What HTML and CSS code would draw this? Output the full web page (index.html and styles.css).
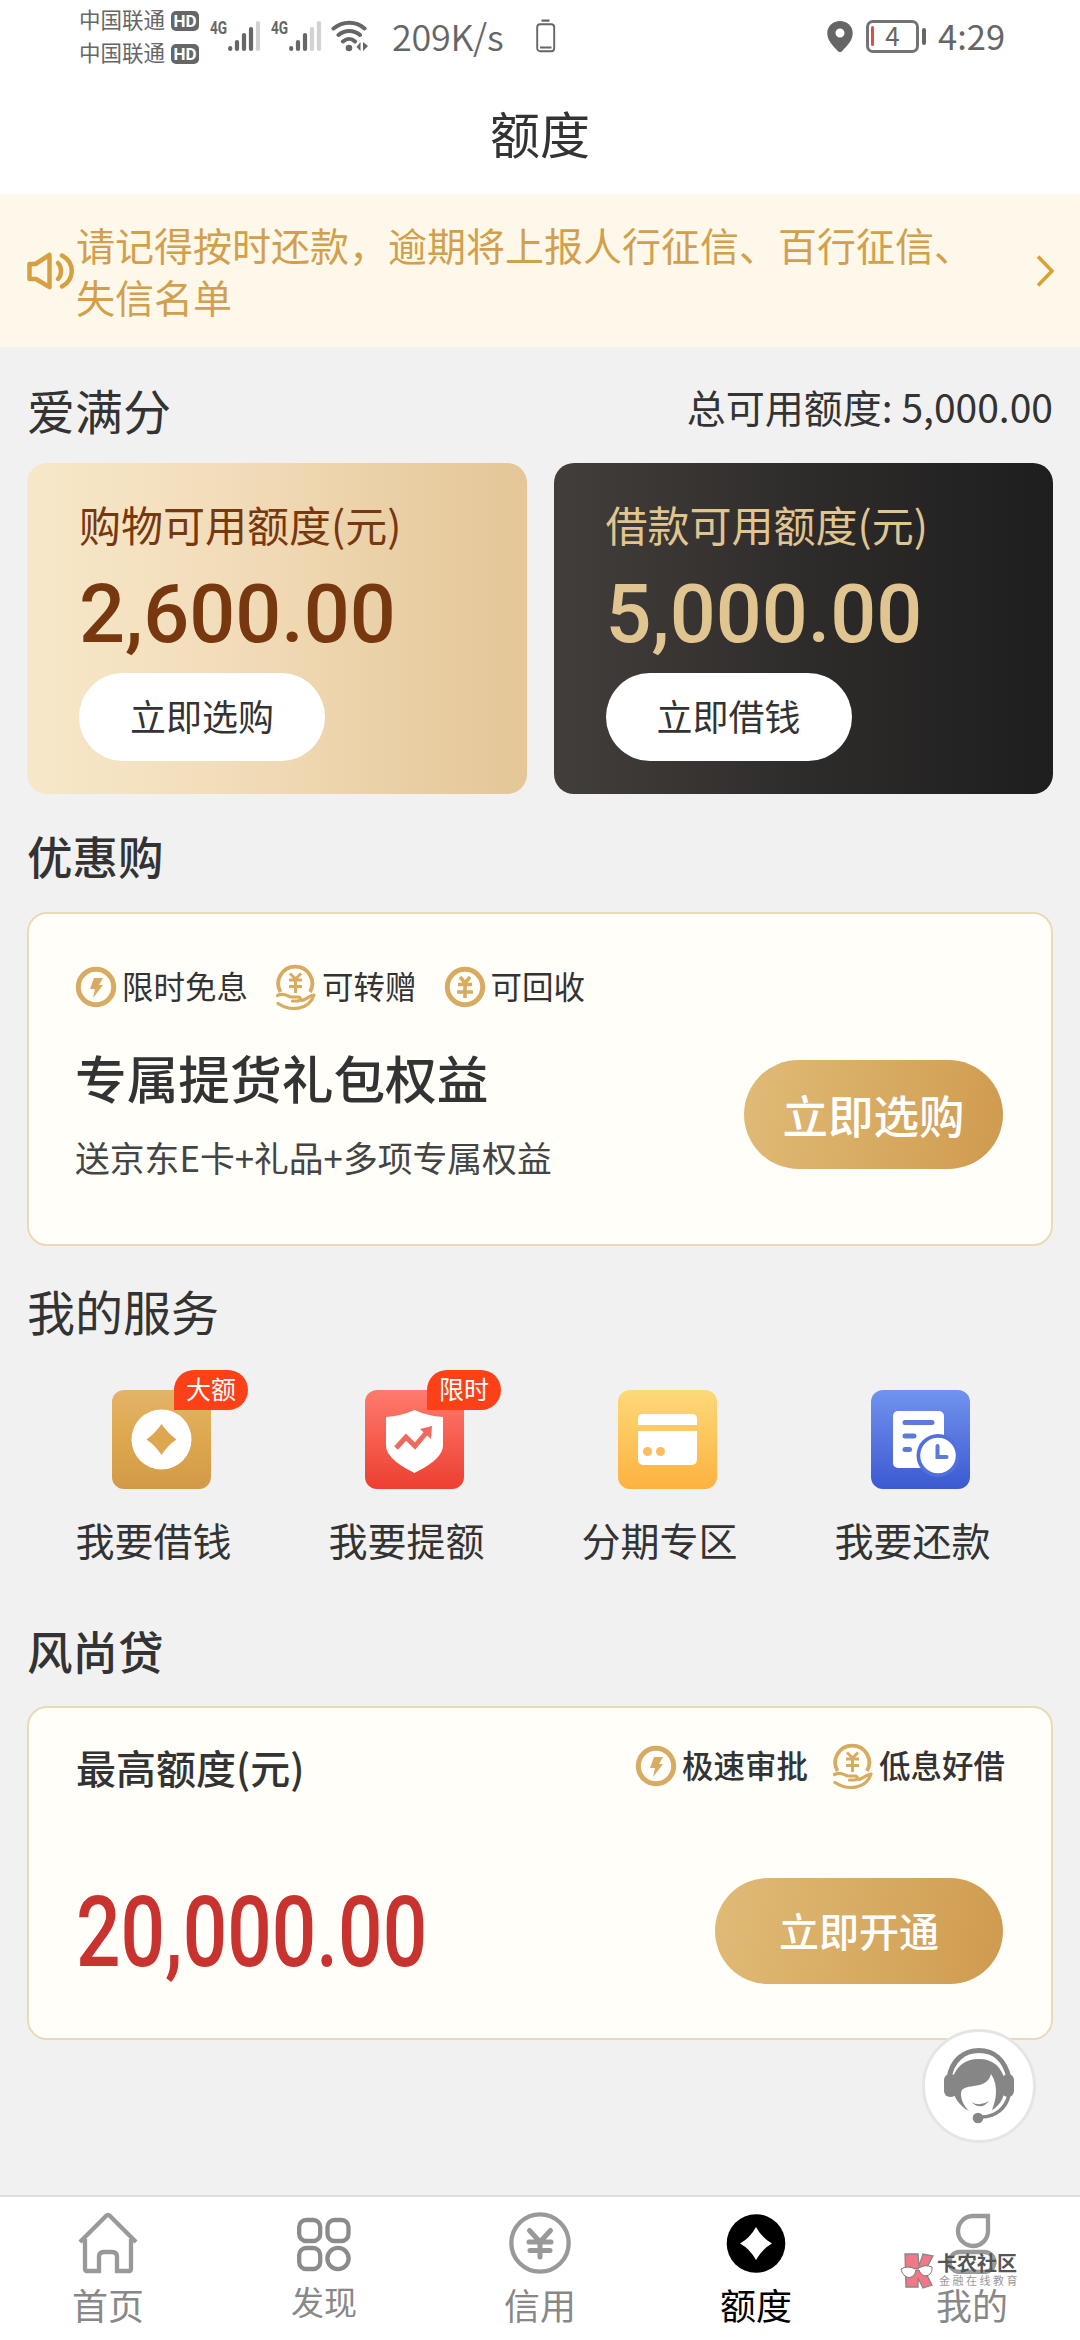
FILE: index.html
```html
<!DOCTYPE html>
<html lang="zh-CN">
<head>
<meta charset="utf-8">
<title>额度</title>
<link rel="stylesheet" href="styles.css">
</head>
<body>
<svg class="defs" width="0" height="0">
  <defs>
    <linearGradient id="amber" x1="0" y1="0" x2="0" y2="1"><stop offset="0" stop-color="#e3b468"/><stop offset=".5" stop-color="#dda74f"/><stop offset="1" stop-color="#d29a48"/></linearGradient>
    <linearGradient id="red" x1="0" y1="0" x2="0" y2="1"><stop offset="0" stop-color="#ff7b6d"/><stop offset="1" stop-color="#ec3f31"/></linearGradient>
    <linearGradient id="yellow" x1="0" y1="0" x2="0" y2="1"><stop offset="0" stop-color="#fdd978"/><stop offset="1" stop-color="#fdb23f"/></linearGradient>
    <linearGradient id="blue" x1="0" y1="0" x2="0" y2="1"><stop offset="0" stop-color="#7193ee"/><stop offset="1" stop-color="#3c59d1"/></linearGradient>
    <symbol id="bolt" viewBox="0 0 42 44">
      <circle cx="21" cy="22" r="17.700" fill="none" stroke="#d8ab63" stroke-width="5"/>
      <path d="M19 13h9l-4 7h4L18 33l2-9h-5z" fill="#d8ab63"/>
    </symbol>
    <symbol id="yen" viewBox="0 0 42 44">
      <circle cx="21" cy="22" r="17.700" fill="none" stroke="#d8ab63" stroke-width="5"/>
      <path d="M16 12l5 6 5-6M21 18v15M14 19.500h14M13 27h16" fill="none" stroke="#d8ab63" stroke-width="3.600"/>
    </symbol>
    <symbol id="hand" viewBox="0 0 42 48">
      <path d="M5.500 29A17 17 0 1 1 35 29" fill="none" stroke="#d8ab63" stroke-width="3.800"/>
      <path d="M15 10.500l5.500 5.500 5.500-5.500M20.500 16v14M14 17h13M14 23.500h13" fill="none" stroke="#d8ab63" stroke-width="3"/>
      <path d="M2.500 32.500c6-3 9 0 13 1.500h8c3 1 2 4-1 4h-5" fill="none" stroke="#d8ab63" stroke-width="3.200" stroke-linecap="round"/>
      <path d="M3 40.500c12 8 31 7 36-8.500-4 0-7 4-12 5.500" fill="none" stroke="#d8ab63" stroke-width="3.200" stroke-linecap="round" stroke-linejoin="round"/>
    </symbol>
  </defs>
</svg>

<header class="status">
  <div class="carriers">
    <div class="carrier">中国联通<b>HD</b></div>
    <div class="carrier">中国联通<b>HD</b></div>
  </div>
  <div class="signal"><span>4G</span>
    <svg width="33" height="32" viewBox="0 0 33 32"><path d="M2.200 28v1M9 22v7M16 15v14M23 9v20" stroke="#666" stroke-width="4.200" stroke-linecap="round"/><path d="M30 3v26" stroke="#d2d2d2" stroke-width="4.200" stroke-linecap="round"/></svg>
  </div>
  <div class="signal second"><span>4G</span>
    <svg width="33" height="32" viewBox="0 0 33 32"><path d="M2.200 28v1M9 22v7M16 15v14" stroke="#666" stroke-width="4.200" stroke-linecap="round"/><path d="M23 9v20M30 3v26" stroke="#d2d2d2" stroke-width="4.200" stroke-linecap="round"/></svg>
  </div>
  <svg class="wifi" width="38" height="32" viewBox="0 0 38 32"><g fill="none" stroke="#666" stroke-width="4" stroke-linecap="round"><path d="M2.500 8.500C12 .8 25 .8 33.500 8.500M7.500 15c6-5.500 15.500-5.500 21.500 0M12 21.500c4-3.500 8.500-3.500 12 0"/></g><circle cx="18" cy="28" r="3.300" fill="#666"/><path d="M25.500 27l4-5v9M32 22v9l5-5z" fill="#666"/></svg>
  <span class="speed">209K/s</span>
  <svg class="phone-battery" width="20" height="34" viewBox="0 0 20 34"><rect x="1.200" y="5.200" width="17" height="27" rx="3" fill="none" stroke="#666" stroke-width="1.900"/><path d="M5.500 1.700h8M4 28.500h11.500" stroke="#666" stroke-width="2.200"/></svg>
  <div class="status-right">
    <svg width="26" height="33" viewBox="0 0 26 33"><path fill="#666" fill-rule="evenodd" d="M13 1C5.800 1 .3 6 .3 13.200.3 20 5.500 25.500 11 31.200q2 1.800 4 0c5.500-5.700 10.700-11.200 10.700-18C25.700 6 20.200 1 13 1zm0 7.500a4.500 4.500 0 1 1 0 9 4.500 4.500 0 0 1 0-9z"/></svg>
    <div class="battery">4</div>
    <span class="clock">4:29</span>
  </div>
</header>

<h1 class="title">额度</h1>

<section class="notice">
  <svg class="speaker" width="49" height="38" viewBox="0 0 49 38"><g fill="none" stroke="#d6a040" stroke-width="4.500" stroke-linecap="round" stroke-linejoin="round"><path d="M2.500 12h6L22.500 2.800v32.400L9 27H2.500z"/><path d="M31 11c4 4 4 12 0 16M35 3.500c13 7 13 24 0 31"/></g></svg>
  <p>请记得按时还款，逾期将上报人行征信、百行征信、<br>失信名单</p>
  <svg class="chevron" width="18" height="34" viewBox="0 0 18 34"><path d="M2 2.500l14 14.500L2 31.500" fill="none" stroke="#d9a233" stroke-width="3.600"/></svg>
</section>

<main>
  <div class="head first"><h2>爱满分</h2><span class="total">总可用额度: 5,000.00</span></div>
  <div class="limits">
    <article class="limit shop"><h3>购物可用额度(元)</h3><strong>2,600.00</strong><button>立即选购</button></article>
    <article class="limit cash"><h3>借款可用额度(元)</h3><strong>5,000.00</strong><button>立即借钱</button></article>
  </div>

  <div class="head promo-head"><h2>优惠购</h2></div>
  <article class="card promo">
    <div>
      <div class="tags">
        <span class="tag"><svg><use href="#bolt"/></svg><i>限时免息</i></span>
        <span class="tag"><svg class="tall"><use href="#hand"/></svg><i>可转赠</i></span>
        <span class="tag"><svg><use href="#yen"/></svg><i>可回收</i></span>
      </div>
      <h3>专属提货礼包权益</h3>
      <p>送京东E卡+礼品+多项专属权益</p>
    </div>
    <button class="cta">立即选购</button>
  </article>

  <div class="head service-head"><h2>我的服务</h2></div>
  <div class="services">
    <div class="service">
      <div class="icon"><svg viewBox="0 0 99 99"><rect width="99" height="99" rx="12" fill="url(#amber)"/><circle cx="49.500" cy="49.500" r="30" fill="#fff"/><path d="M49.500 34q6 9 15 15.500-9 6-15 15.500-6-9.500-15-15.500 9-6.500 15-15.500z" fill="#dda74f"/></svg><em>大额</em></div>
      <span>我要借钱</span>
    </div>
    <div class="service">
      <div class="icon"><svg viewBox="0 0 99 99"><rect width="99" height="99" rx="12" fill="url(#red)"/><path d="M49.500 20q13 6 28.500 7v28c0 13-17 22-28.500 28C38 77 21 68 21 55V27q15-1 28.500-7z" fill="#fff"/><path d="M31 58l10-11 9 9 11-13" fill="none" stroke="#f1685c" stroke-width="5"/><path d="M55 39l12-3-1 13z" fill="#f1685c"/></svg><em>限时</em></div>
      <span>我要提额</span>
    </div>
    <div class="service">
      <div class="icon"><svg viewBox="0 0 99 99"><rect width="99" height="99" rx="12" fill="url(#yellow)"/><path d="M20 35v-6q0-5 5-5h49q5 0 5 5v6zM20 41h59v28q0 6-6 6H26q-6 0-6-6z" fill="#fff"/><circle cx="29.500" cy="61.500" r="4.500" fill="#fbbd60"/><circle cx="42.500" cy="61.500" r="4.500" fill="#fbbd60"/></svg></div>
      <span>分期专区</span>
    </div>
    <div class="service">
      <div class="icon"><svg viewBox="0 0 99 99"><rect width="99" height="99" rx="12" fill="url(#blue)"/><rect x="22" y="21" width="51" height="57" rx="5" fill="#fff"/><path d="M34 32.500h27M34 46h9M34 59.500h4.500" stroke="#5b7ada" stroke-width="5" stroke-linecap="round"/><circle cx="67" cy="65.500" r="21.500" fill="#5270dc"/><circle cx="67" cy="65.500" r="17.800" fill="#fff"/><path d="M66.500 56v11h9" fill="none" stroke="#5b7ada" stroke-width="4" stroke-linecap="round"/></svg></div>
      <span>我要还款</span>
    </div>
  </div>

  <div class="head loan-head"><h2>风尚贷</h2></div>
  <article class="card loan">
    <div class="loan-top">
      <h3>最高额度(元)</h3>
      <div class="tags">
        <span class="tag"><svg><use href="#bolt"/></svg><i>极速审批</i></span>
        <span class="tag"><svg class="tall"><use href="#hand"/></svg><i>低息好借</i></span>
      </div>
    </div>
    <div class="loan-bottom"><strong>20,000.00</strong><button class="cta">立即开通</button></div>
  </article>
</main>

<nav class="tabs">
  <a class="tab"><svg width="60" height="62" viewBox="0 0 60 62"><path d="M7 27v30q0 2 2 2h12V45q0-5 5-5h8q5 0 5 5v14h12q2 0 2-2V27M2 30L28 4q2-2 4 0l26 26" fill="none" stroke="#999" stroke-width="4.300"/></svg><span>首页</span></a>
  <a class="tab small"><svg width="54" height="62" viewBox="0 0 54 62"><g fill="none" stroke="#8b8b8b" stroke-width="4.300"><rect x="2.200" y="8" width="21" height="21" rx="7"/><rect x="30.500" y="8" width="21" height="21" rx="7"/><rect x="2.200" y="36" width="21" height="21" rx="7"/><circle cx="41" cy="46.500" r="10.600"/></g></svg><span>发现</span></a>
  <a class="tab"><svg width="62" height="62" viewBox="0 0 62 62"><circle cx="31" cy="31" r="28.700" fill="none" stroke="#999" stroke-width="4.300"/><path d="M20.500 18.500L31 30l10.500-11.500M31 31v14M20 30h22M21 38.500h20" fill="none" stroke="#999" stroke-width="5" stroke-linecap="round"/></svg><span>信用</span></a>
  <a class="tab active"><svg width="60" height="62" viewBox="0 0 60 62"><circle cx="30" cy="31.500" r="29.300"/><path d="M30 15q6 11 16 16.500Q36 37 30 48q-6-11-16-16.500Q24 26 30 15z" fill="#fff"/></svg><span>额度</span></a>
  <a class="tab"><svg width="60" height="62" viewBox="0 0 60 62"><g fill="none" stroke="#999" stroke-width="4.300"><path d="M30.500 4H46v15.500A15 15 0 1 1 30.500 4z"/><rect x="7.500" y="40" width="45" height="20" rx="10"/></g></svg><span>我的</span></a>
</nav>

<a class="support"><svg width="72" height="76" viewBox="0 0 72 76"><g fill="#868686"><path d="M6 30C9 12 21 2.500 36 2.500S62 12 66 30" fill="none" stroke="#868686" stroke-width="5"/><rect x="1" y="26" width="13" height="23" rx="6"/><rect x="59" y="26" width="12" height="23" rx="6"/><path d="M9 32C13 18 22 11 36 11s23 8 26 22v9c-2 10-6 16-13 20 4-10 7-24-1-36-2 9-10 11-17 12-8 1-13 2-13 8 0 6 3 12 8 17C16 58 11 48 9 42z"/></g><path d="M66 47C63 60 53 69 38 69" fill="none" stroke="#868686" stroke-width="3.500"/><circle cx="35" cy="70" r="5.300" fill="#868686"/><path d="M28 54q9 5 18-1-8 10-18 1z" fill="#868686"/></svg></a>

<aside class="watermark">
  <svg width="34" height="37" viewBox="0 0 34 37"><path d="M5 2h13l1 12 4-12 10 2-8 15 7 14-9 3-5-10v9H6z" fill="#f17886" stroke="#888" stroke-width="1.300"/><path d="M1 17q7-4 14 0l4-1q6-4 13-1c1 10-10 12-13 3h-3c-2 11-13 9-15-1z" fill="#fff" stroke="#777"/></svg>
  <div><b>卡农社区</b><small>金融在线教育</small></div>
</aside>
</body>
</html>
```
FILE: styles.css
```css
* { box-sizing: border-box; margin: 0; padding: 0; }
body {
  position: relative;
  display: flex;
  flex-direction: column;
  width: 1080px;
  height: 2340px;
  overflow: hidden;
  background: #f1f1f1;
  color: #333;
  font-family: "Noto Sans CJK SC", sans-serif;
}
svg { display: block; flex: none; }
.defs { position: absolute; }
button { border: 0; font-family: inherit; }
h1, h2, h3 { font-weight: 400; white-space: nowrap; }

/* status bar */
.status { display: flex; height: 76px; padding-left: 79px; background: #fff; color: #666; }
.carriers { display: flex; flex-direction: column; gap: 1px; padding-top: 3px; }
.carrier { display: flex; align-items: center; height: 32px; font-size: 21.500px; line-height: 32px; }
.carrier b {
  width: 28px; height: 20px; margin: 3px 0 0 6px;
  border-radius: 5px; background: #666; color: #fff;
  font: 700 17px/20px "Roboto", sans-serif; text-align: center;
}
.signal { display: flex; padding-top: 20px; margin-left: 11px; }
.signal span { width: 17px; height: 18px; margin-right: 1px; font: 700 19px/16px "Roboto", sans-serif; transform: scaleX(.72); transform-origin: left; }
.signal.second { margin-left: 10px; }
.wifi { margin: 20px 0 0 9px; }
.speed { margin-left: 23px; width: 144px; font-size: 36px; font-weight: 350; line-height: 70px; letter-spacing: -.3px; }
.phone-battery { margin-top: 19px; }
.status-right { display: flex; margin-left: auto; padding: 20px 77px 0 0; }
.battery {
  position: relative; width: 53px; height: 33px; margin-left: 13px;
  border: 3px solid #737373; border-radius: 7px;
  font-size: 26px; line-height: 24px; text-align: center;
}
.battery::before { content: ""; position: absolute; left: 2px; top: 3px; width: 3px; height: 20px; background: #dc5048; border-radius: 2px; }
.battery::after { content: ""; position: absolute; right: -10px; top: 5px; width: 4px; height: 17px; background: #666; border-radius: 2px; }
.clock { width: 65px; margin-left: 19px; font-size: 34.500px; line-height: 31px; white-space: nowrap; }

.title { height: 118px; background: #fff; font-size: 50px; line-height: 112px; text-align: center; }

/* notice strip */
.notice { display: flex; align-items: center; height: 153px; padding: 0 26px 0 27px; background: #fef8ea; color: #d2a04c; }
.notice p { width: 920px; font-size: 39px; line-height: 52px; white-space: nowrap; padding-bottom: 2px; }
.chevron { margin-left: auto; }

/* content */
main { flex: 1; padding: 0 27px; }
.head { display: flex; align-items: center; justify-content: space-between; height: 116px; }
.head h2 { font-size: 48px; line-height: 60px; }
.first { padding-top: 5px; }
.first h2 { padding-top: 3px; }
.total { padding-bottom: 4px; font-size: 39px; line-height: 50px; }
.head.promo-head { height: 118px; padding-top: 4px; }
.promo-head h2, .loan-head h2 { font-size: 45.500px; font-weight: 500; }
.head.service-head { height: 124px; padding-top: 3px; }
.loan-head { padding-top: 3px; }

.limits { display: grid; grid-template-columns: 1fr 1fr; gap: 27px; height: 331px; }
.limit { display: flex; flex-direction: column; align-items: flex-start; padding: 30px 52px 0; border-radius: 20px; }
.limit h3 { height: 62px; font-size: 42px; line-height: 62px; }
.limit strong { height: 118px; font: 500 81px/119px "Roboto", sans-serif; }
.limit button { width: 246px; height: 88px; border-radius: 44px; background: #fff; color: #333; font-size: 36px; line-height: 81px; padding-bottom: 3px; }
.shop { background: linear-gradient(90deg, #f6e8c9, #f3debc 35%, #e4c697); color: #773810; }
.cash { background: linear-gradient(90deg, #433e3b, #2e2c2b 50%, #1e1e1e); color: #e0c591; }

.card { height: 334px; border: 2px solid #ecd9b7; border-radius: 20px; background: #fffef9; }
.tags, .tag { display: flex; align-items: center; }
.tags { gap: 27px; height: 46px; }
.tag { gap: 5px; font-size: 31.500px; line-height: 44px; }
.tag i { padding-bottom: 4px; font-style: normal; }
.tag svg { width: 42px; height: 44px; }
.tag .tall { height: 48px; }
.promo { display: flex; justify-content: space-between; padding: 50px 48px 0 46px; }
.promo h3 { height: 76px; margin-top: 29px; font-size: 51.700px; font-weight: 500; line-height: 76px; }
.promo p { margin-top: 17px; font-size: 34.800px; line-height: 50px; color: #444; }
.cta {
  width: 259px; height: 109px; border-radius: 55px;
  background: linear-gradient(100deg, #e0bb77, #d2a055 85%, #cd9a50); color: #fff;
  font-size: 45.500px; font-weight: 500; line-height: 105px; white-space: nowrap;
}
.promo .cta { margin-top: 96px; }

.services { display: grid; grid-template-columns: repeat(4, 253px); height: 220px; }
.service { display: flex; flex-direction: column; align-items: center; padding-top: 20px; }
.icon { position: relative; left: 8px; width: 99px; height: 99px; }
.icon svg { width: 99px; height: 99px; }
.icon em {
  position: absolute; left: 62px; top: -20px; width: 74px; height: 40px;
  border-radius: 20px 20px 20px 0; background: #fc4119; color: #fff;
  font-size: 25px; font-style: normal; line-height: 36px; text-align: center;
}
.service span { margin-top: 22px; font-size: 39px; line-height: 56px; }

.loan { padding: 0 48px 0 47px; }
.loan-top { display: flex; align-items: center; justify-content: space-between; height: 118px; }
.loan-top h3 { font-size: 40px; font-weight: 500; }
.loan-top .tags { gap: 24px; margin-right: -2px; padding-bottom: 2px; }
.loan-top .tag { font-weight: 500; }
.loan-bottom { display: flex; align-items: center; justify-content: space-between; height: 106px; margin-top: 52px; }
.loan-bottom strong { width: 350px; padding-top: 3px; font: 500 98px/106px "Roboto", sans-serif; color: #c8322f; transform: scaleX(.8); transform-origin: left; }
.loan .cta { width: 288px; height: 106px; font-size: 40px; line-height: 100px; padding-bottom: 2px; }

/* bottom tabs */
.tabs { display: grid; grid-template-columns: repeat(5, 216px); height: 145px; border-top: 2px solid #dedede; background: #fff; }
.tab { display: flex; flex-direction: column; align-items: center; padding-top: 15px; color: #888; font-size: 36px; line-height: 52px; }
.tab span { margin-top: 4px; }
.small span { margin-top: 1px; font-size: 33px; }
.active { color: #000; }

/* floating layers */
.support {
  position: absolute; left: 922px; top: 2029px; width: 114px; height: 114px;
  display: flex; align-items: center; justify-content: center;
  border: 3px solid #e5e5e5; border-radius: 50%; background: #fff;
}
.watermark { position: absolute; left: 900px; top: 2252px; display: flex; gap: 3px; }
.watermark div { display: flex; flex-direction: column; color: #555; }
.watermark b { font-size: 20px; font-weight: 700; line-height: 21px; }
.watermark small { margin-left: 2px; color: #999; font-size: 11px; letter-spacing: 2.500px; line-height: 14px; }
```
